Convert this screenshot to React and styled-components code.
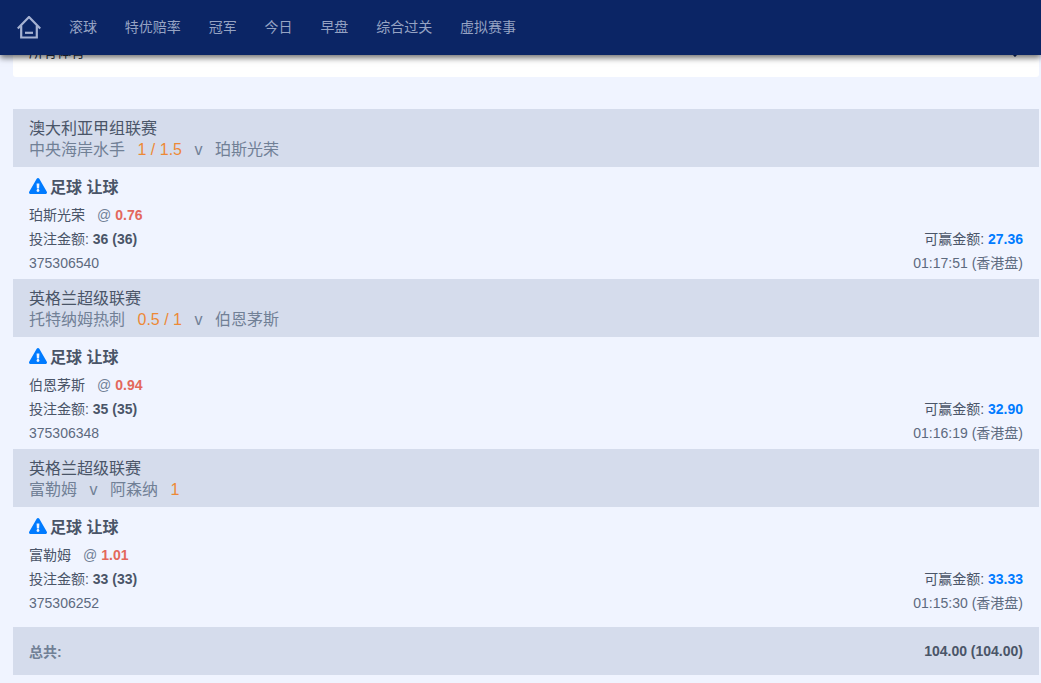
import React from "react";
import styled, { createGlobalStyle } from "styled-components";
import { FaExclamationTriangle } from "react-icons/fa";

const NAV_ITEMS = ["滚球", "特优赔率", "冠军", "今日", "早盘", "综合过关", "虚拟赛事"];

const BETS = [
  {
    league: "澳大利亚甲组联赛",
    teams: ["中央海岸水手", "1 / 1.5", "v", "珀斯光荣"],
    pick: "珀斯光荣",
    odds: "0.76",
    stake: "36 (36)",
    win: "27.36",
    id: "375306540",
    time: "01:17:51 (香港盘)",
  },
  {
    league: "英格兰超级联赛",
    teams: ["托特纳姆热刺", "0.5 / 1", "v", "伯恩茅斯"],
    pick: "伯恩茅斯",
    odds: "0.94",
    stake: "35 (35)",
    win: "32.90",
    id: "375306348",
    time: "01:16:19 (香港盘)",
  },
  {
    league: "英格兰超级联赛",
    teams: ["富勒姆", "v", "阿森纳", "1"],
    pick: "富勒姆",
    odds: "1.01",
    stake: "33 (33)",
    win: "33.33",
    id: "375306252",
    time: "01:15:30 (香港盘)",
  },
];

const isHandicap = (text) => /\d/.test(text);

const App = () => {
  return (
    <Page>
      <GlobalStyle />
      <Header>
        <HomeIcon viewBox="0 0 24 24">
          <path d="M.8 12.500 12 1 23.200 12.500" />
          <path d="M4.200 9.500V21.500H19.800V9.500" />
          <path d="M8 16.800H16" />
        </HomeIcon>
        <NavList>
          {NAV_ITEMS.map((item) => (
            <NavItem key={item}>{item}</NavItem>
          ))}
        </NavList>
      </Header>

      <Filter>
        <FilterLabel>所有体育</FilterLabel>
        <Chevron viewBox="0 0 10 6">
          <path d="M1 1l4 4 4-4" />
        </Chevron>
      </Filter>

      <BetList>
        {BETS.map((bet) => (
          <section key={bet.id}>
            <MatchHead>
              <League>{bet.league}</League>
              <Teams>
                {bet.teams.map((text) => (
                  <TeamPart key={text} $handicap={isHandicap(text)}>
                    {text}
                  </TeamPart>
                ))}
              </Teams>
            </MatchHead>
            <BetBody>
              <BetTitle>
                <WarnIcon />
                足球 让球
              </BetTitle>
              <PickRow>
                <span>{bet.pick}</span>
                <At>@</At>
                <Odds>{bet.odds}</Odds>
              </PickRow>
              <InfoRow>
                <span>
                  投注金额: <Stake>{bet.stake}</Stake>
                </span>
                <span>
                  可赢金额: <Win>{bet.win}</Win>
                </span>
              </InfoRow>
              <InfoRow>
                <Muted>{bet.id}</Muted>
                <Muted>{bet.time}</Muted>
              </InfoRow>
            </BetBody>
          </section>
        ))}
      </BetList>

      <Total>
        <TotalLabel>总共:</TotalLabel>
        <Stake>104.00 (104.00)</Stake>
      </Total>
    </Page>
  );
};

const GlobalStyle = createGlobalStyle`
  html, body {
    margin: 0;
    padding: 0;
    background: #f0f4ff;
  }
  body {
    font-family: "Liberation Sans", "Noto Sans CJK SC", Arial, sans-serif;
    overflow: hidden;
  }
`;

const Page = styled.div`
  position: relative;
  width: 1041px;
  height: 683px;
  overflow: hidden;
  padding: 0 2px 0 13px;
  box-sizing: border-box;
  background: #f0f4ff;
`;

const Header = styled.header`
  position: absolute;
  top: 0;
  left: 0;
  right: 0;
  z-index: 2;
  height: 55px;
  display: flex;
  align-items: center;
  padding-left: 17px;
  box-sizing: border-box;
  background: #0b2565;
  box-shadow: 0 3px 6px rgba(0, 0, 0, 0.55);
`;

const HomeIcon = styled.svg`
  width: 24px;
  height: 24px;
  flex: none;
  fill: none;
  stroke: #a6b2d2;
  stroke-width: 2.2;
`;

const NavList = styled.nav`
  display: flex;
  gap: 27.85px;
  margin-left: 28px;
`;

const NavItem = styled.a`
  font-size: 14px;
  line-height: 55px;
  color: #96a3c3;
`;

const Filter = styled.div`
  height: 77px;
  display: flex;
  align-items: flex-end;
  justify-content: space-between;
  padding: 0 19px 15px 16px;
  box-sizing: border-box;
  background: #fff;
  border-radius: 0 0 3px 3px;
`;

const FilterLabel = styled.span`
  font-size: 14px;
  line-height: 20px;
  color: #2b3445;
`;

const Chevron = styled.svg`
  width: 10px;
  height: 6px;
  margin-bottom: 5px;
  fill: none;
  stroke: #0b2565;
  stroke-width: 1.5;
`;

const BetList = styled.div`
  margin-top: 32px;
`;

const MatchHead = styled.div`
  height: 58px;
  padding: 10px 16px 0;
  box-sizing: border-box;
  background: #d5dcec;
`;

const League = styled.div`
  font-size: 16px;
  line-height: 20px;
  color: #4a5568;
`;

const Teams = styled.div`
  display: flex;
  gap: 12.5px;
  font-size: 16px;
  line-height: 21px;
  color: #718096;
`;

const TeamPart = styled.span`
  color: ${(props) => (props.$handicap ? "#ed8936" : "#718096")};
`;

const BetBody = styled.div`
  height: 112px;
  padding: 8px 16px 0;
  box-sizing: border-box;
  font-size: 14px;
  color: #4a5568;
`;

const BetTitle = styled.div`
  display: flex;
  align-items: center;
  gap: 3px;
  height: 22px;
  margin-bottom: 6px;
  font-size: 16px;
  font-weight: 700;
  color: #4a5568;
`;

const WarnIcon = styled(FaExclamationTriangle)`
  width: 18px;
  height: 16px;
  color: #007bff;
`;

const PickRow = styled.div`
  display: flex;
  gap: 4px;
  height: 24px;
  line-height: 24px;
  & > span:first-child {
    margin-right: 8px;
  }
`;

const At = styled.span`
  color: #718096;
`;

const Odds = styled.span`
  font-weight: 700;
  color: #e3685c;
`;

const InfoRow = styled.div`
  display: flex;
  justify-content: space-between;
  height: 24px;
  line-height: 24px;
`;

const Muted = styled.span`
  color: #5d6a7e;
`;

const Stake = styled.b`
  font-weight: 700;
  color: #4a5568;
`;

const Win = styled.b`
  font-weight: 700;
  color: #007bff;
`;

const Total = styled.div`
  height: 48px;
  margin-top: 8px;
  display: flex;
  align-items: center;
  justify-content: space-between;
  padding: 0 16px;
  font-size: 14px;
  background: #d5dcec;
`;

const TotalLabel = styled.b`
  font-weight: 700;
  color: #718096;
`;

export default App;
